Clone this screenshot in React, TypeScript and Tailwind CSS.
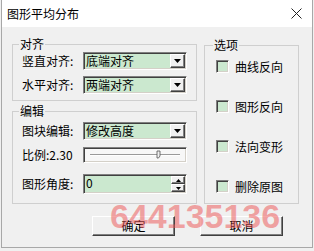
import React from "react";

const FONT = "font-['Noto_Sans_CJK_SC','Noto_Sans',sans-serif]";

// classic sunken / raised frames
const sunken =
  "border border-[#808080] border-r-white border-b-white shadow-[inset_1px_1px_0_#404040,inset_-1px_-1px_0_#d4d0c8]";
const raised =
  "border border-white border-r-[#404040] border-b-[#404040] shadow-[inset_-1px_-1px_0_#808080] bg-[#f0f0f0]";

const DownArrow = () => (
  <svg width="7" height="4" viewBox="0 0 7 4">
    <path d="M0 0h7L3.5 4z" fill="#000" />
  </svg>
);

const ComboBox = ({ value }: { value: string }) => (
  <div className={`w-[104px] h-[18px] bg-[#cbe8cf] flex items-center ${sunken}`}>
    <span className="flex-1 pl-[2px] text-[12px] leading-[14px]">{value}</span>
    <div className={`w-[15px] h-[14px] mr-[1px] flex items-center justify-center ${raised}`}>
      <DownArrow />
    </div>
  </div>
);

const Slider = () => (
  <div className={`w-[104px] h-[16px] bg-[#f7f7f7] flex items-center ${sunken}`}>
    <svg width="100" height="12" viewBox="0 0 100 12">
      <line x1="6" y1="5.5" x2="96" y2="5.5" stroke="#9a9a9a" />
      <line x1="6" y1="6.5" x2="96" y2="6.5" stroke="#ffffff" />
      <path d="M73 2h3v5l-1.5 2h-1.5z" fill="#f0f0f0" stroke="#505050" strokeWidth="0.8" />
    </svg>
  </div>
);

const SpinBox = ({ value }: { value: string }) => (
  <div className={`w-[104px] h-[20px] bg-[#cbe8cf] flex ${sunken}`}>
    <span className="flex-1 pl-[2px] text-[12px] leading-[14px] pt-[1px]">{value}</span>
    <div className="flex flex-col w-[14px] mr-[1px] my-[1px]">
      <div className={`flex-1 flex items-center justify-center ${raised}`}>
        <svg width="5" height="3" viewBox="0 0 5 3">
          <path d="M0 3h5L2.5 0z" fill="#000" />
        </svg>
      </div>
      <div className={`flex-1 flex items-center justify-center ${raised}`}>
        <svg width="5" height="3" viewBox="0 0 5 3">
          <path d="M0 0h5L2.5 3z" fill="#000" />
        </svg>
      </div>
    </div>
  </div>
);

const Row = ({ label, children }: { label: string; children: React.ReactNode }) => (
  <div className="flex items-center">
    <span className="w-[61px] text-[12px] leading-[14px] whitespace-nowrap">{label}</span>
    {children}
  </div>
);

const CheckRow = ({ label }: { label: string }) => (
  <div className="flex items-center h-[13px]">
    <div className={`w-[13px] h-[13px] bg-[#cbe8cf] ${sunken}`} />
    <span className="ml-[6px] text-[12px] leading-[14px]">{label}</span>
  </div>
);

const Legend = ({ text }: { text: string }) => (
  <legend className="ml-[-3px] px-[1px] text-[12px] leading-[12px]">{text}</legend>
);

export default function App() {
  return (
    <div className={`w-[314px] h-[251px] bg-[#f0f0f0] relative overflow-hidden text-black ${FONT}`}>
      <div className="ml-[1px] w-[312px] h-[248px] border border-t-0 border-[#a8a8a8] flex flex-col">
        {/* title bar */}
        <div className="h-[27px] bg-white flex items-center justify-between pl-[5px] pr-[10px]">
          <span className="text-[12px] leading-[14px]">图形平均分布</span>
          <svg width="11" height="11" viewBox="0 0 11 11">
            <path d="M0.5 0.5l10 10M10.5 0.5l-10 10" stroke="#222" strokeWidth="1" />
          </svg>
        </div>

        <div className="flex pl-[10px] gap-[7px] mt-[11px]">
          {/* left column */}
          <div className="flex flex-col w-[185px]">
            <fieldset className="border border-[#cfcfcf] pl-[9px] pt-[2px] pb-[6px] flex flex-col gap-[6px]">
              <Legend text="对齐" />
              <Row label="竖直对齐:">
                <ComboBox value="底端对齐" />
              </Row>
              <Row label="水平对齐:">
                <ComboBox value="两端对齐" />
              </Row>
            </fieldset>

            <fieldset className="mt-[4px] border border-[#cfcfcf] pl-[9px] pt-[5px] pb-[9px] flex flex-col">
              <Legend text="编辑" />
              <Row label="图块编辑:">
                <ComboBox value="修改高度" />
              </Row>
              <div className="mt-[7px]">
                <Row label="比例:2.30">
                  <Slider />
                </Row>
              </div>
              <div className="mt-[11px]">
                <Row label="图形角度:">
                  <SpinBox value="0" />
                </Row>
              </div>
            </fieldset>
          </div>

          {/* right column */}
          <fieldset className="w-[95px] mt-[1px] border border-[#cfcfcf] pl-[11px] pt-[9px] flex flex-col gap-[27px]">
            <Legend text="选项" />
            <CheckRow label="曲线反向" />
            <CheckRow label="图形反向" />
            <CheckRow label="法向变形" />
            <CheckRow label="删除原图" />
          </fieldset>
        </div>

        {/* buttons */}
        <div className="flex pl-[90px] gap-[25px] mt-[12px]">
          <button className={`w-[83px] h-[20px] text-[12px] leading-[14px] ${raised}`}>确定</button>
          <button className={`w-[83px] h-[20px] text-[12px] leading-[14px] ${raised}`}>取消</button>
        </div>
      </div>

      {/* watermark */}
      <div className="absolute left-[110px] top-[199px] pointer-events-none font-['Liberation_Sans',sans-serif] font-bold text-[34px] leading-[35px] text-[rgba(236,80,80,0.5)]">
        644135136
      </div>
    </div>
  );
}
